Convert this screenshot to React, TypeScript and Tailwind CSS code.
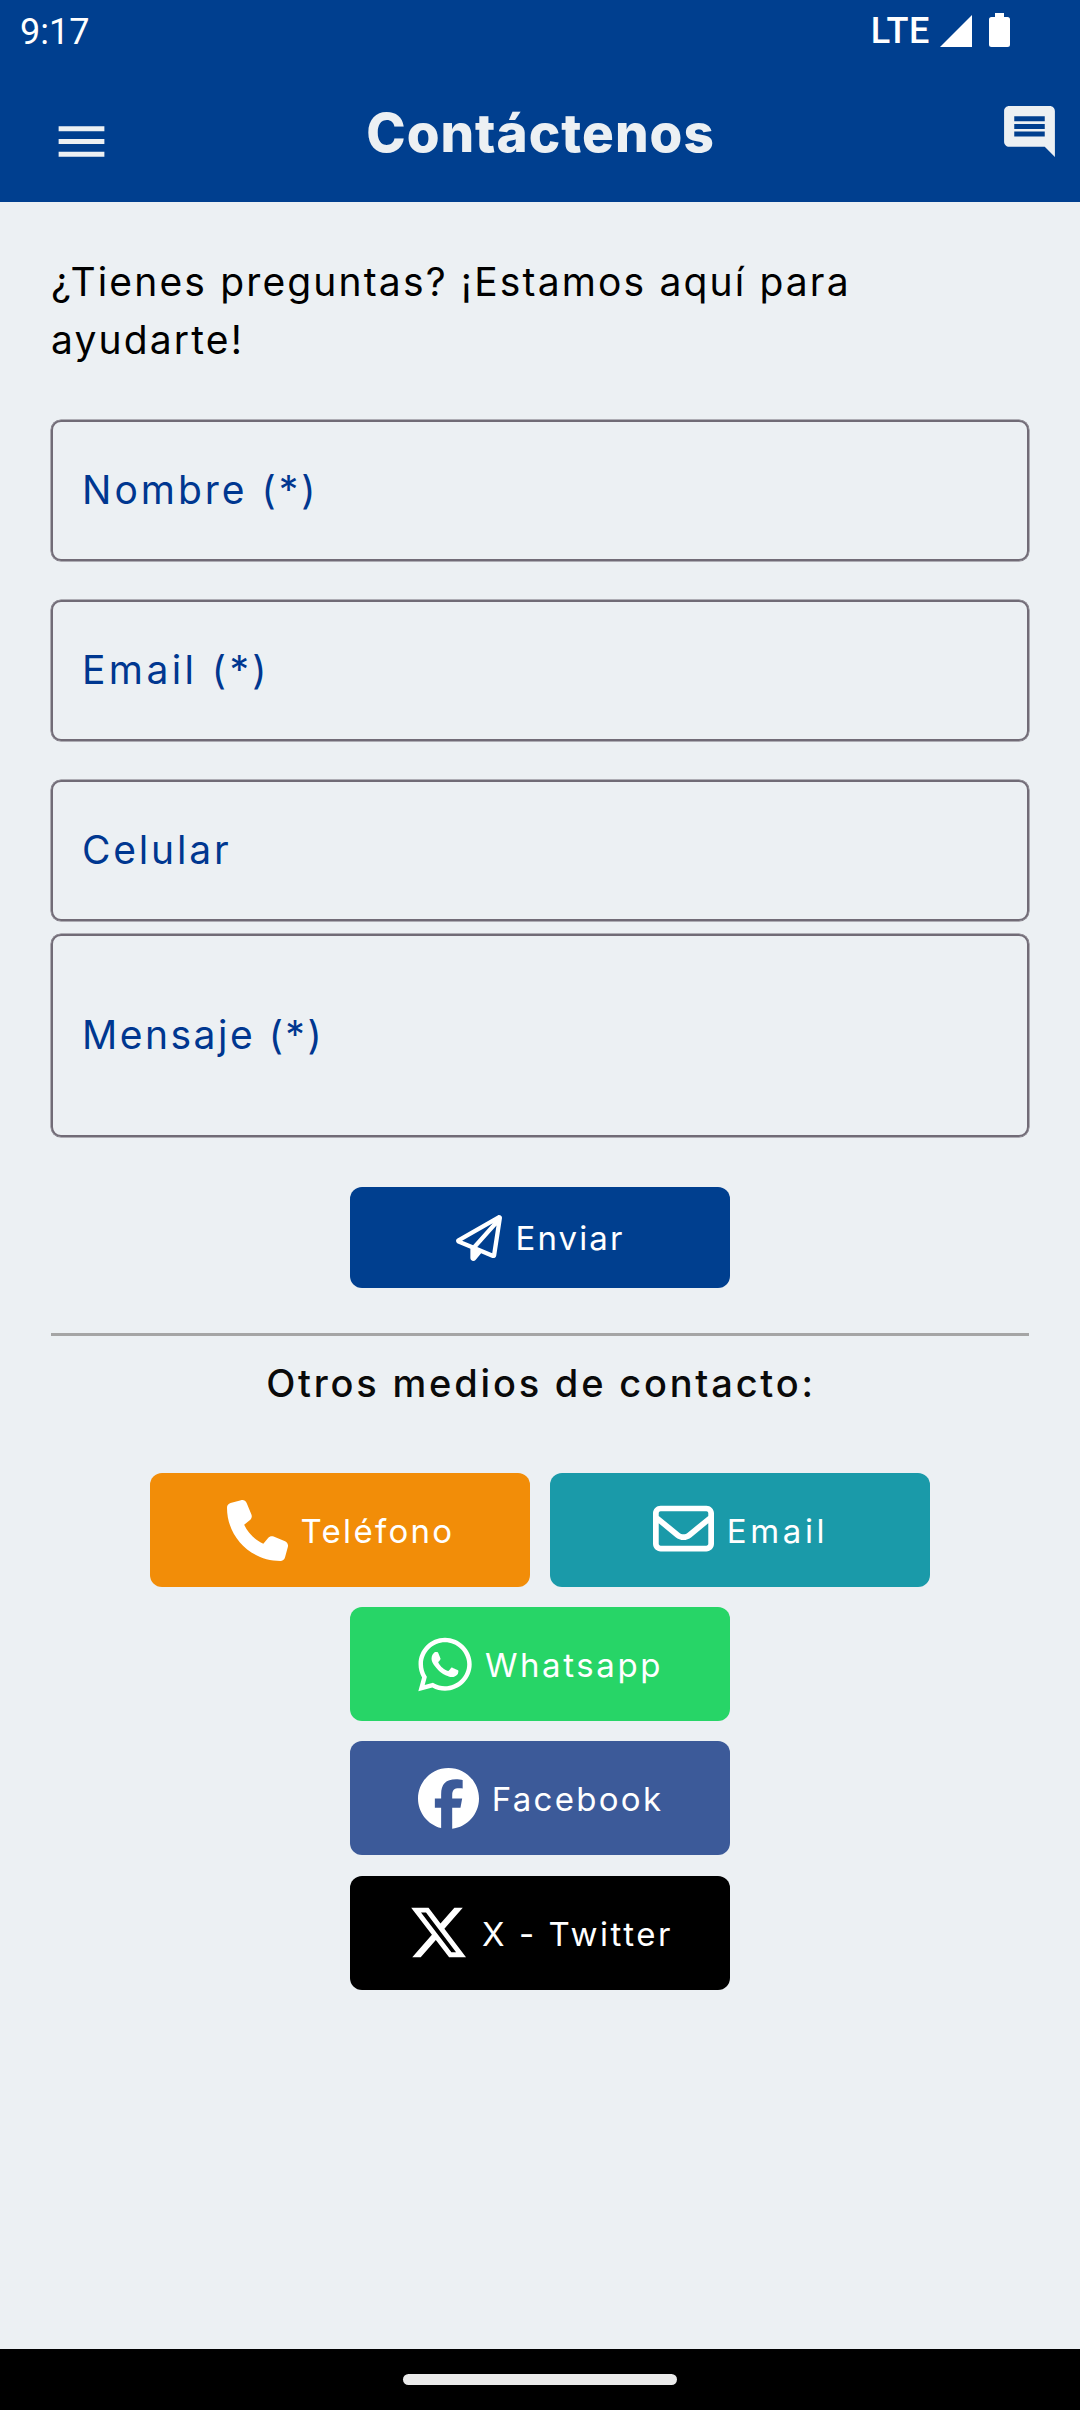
import { clsx } from "clsx"
import { MdComment, MdMenu } from "react-icons/md"
import { FaFacebook, FaPhone, FaRegEnvelope, FaRegPaperPlane, FaWhatsapp, FaXTwitter } from "react-icons/fa6"

const fields = [
  { label: "Nombre (*)", tracking: "tracking-[3px]", className: "h-[141px] mb-[39px]" },
  { label: "Email (*)", tracking: "tracking-[3.4px]", className: "h-[141px] mb-[39px]" },
  { label: "Celular", tracking: "tracking-[2.8px]", className: "h-[141px] mb-[13px]" },
  { label: "Mensaje (*)", tracking: "tracking-[2.5px]", className: "h-[203px]" },
]

const direct = [
  { label: "Teléfono", icon: FaPhone, color: "bg-[#f28d08]", tracking: "tracking-[2.3px]", iconClass: "w-[61px]" },
  { label: "Email", icon: FaRegEnvelope, color: "bg-[#1a9aa9]", tracking: "tracking-[3.6px]", iconClass: "w-[61px] mb-[3px]" },
]

const social = [
  { label: "Whatsapp", icon: FaWhatsapp, color: "bg-[#27d567]", tracking: "tracking-[2.6px]", iconClass: "w-[54px]" },
  { label: "Facebook", icon: FaFacebook, color: "bg-[#3c5a99]", tracking: "tracking-[2.3px]", iconClass: "w-[61px]" },
  { label: "X - Twitter", icon: FaXTwitter, color: "bg-black", tracking: "tracking-[2.6px]", iconClass: "w-[61px]" },
]

function StatusBar() {
  return (
    <div className="flex h-[62px] items-center pl-[20px] pr-[70px] font-[Roboto] text-[36px] leading-none text-white">
      <span className="pt-[2px]">9:17</span>
      <span className="ml-auto font-medium tracking-[0.6px]">LTE</span>
      <svg className="ml-[10px] h-[32px] w-[32px]" viewBox="0 0 32 32" fill="currentColor">
        <path d="M32 0v32H0z" />
      </svg>
      <svg className="ml-[17px] mb-[2px] h-[34px] w-[21px]" viewBox="0 0 21 34" fill="currentColor">
        <path d="M6 0h9v4h3.500a2.500 2.500 0 0 1 2.500 2.500v25a2.500 2.500 0 0 1-2.500 2.500h-16a2.500 2.500 0 0 1-2.500-2.500v-25a2.500 2.500 0 0 1 2.500-2.500H6z" />
      </svg>
    </div>
  )
}

function Header() {
  return (
    <header className="h-[202px] bg-[#003f8f]">
      <StatusBar />
      <div className="grid h-[140px] grid-cols-[1fr_auto_1fr] items-start text-[#ecf0f3]">
        <button aria-label="Menú" className="mt-[49px] ml-[50.5px] justify-self-start">
          <MdMenu className="h-[61px] w-[61px]" />
        </button>
        <h1 className="mt-[44px] pl-px text-[53px] leading-[54px] font-extrabold tracking-[1px]">Contáctenos</h1>
        <button aria-label="Chat" className="mt-[39px] mr-[20px] justify-self-end">
          <MdComment className="h-[61px] w-[61px]" />
        </button>
      </div>
    </header>
  )
}

function ContactButton({ label, icon: Icon, color, tracking, iconClass }: (typeof direct)[number]) {
  return (
    <button
      className={clsx(
        "flex h-[114px] w-[380px] items-center justify-center gap-[13px] rounded-[12px] pl-px text-white",
        color,
      )}
    >
      <Icon className={clsx("h-[61px] shrink-0", iconClass)} />
      <span className={clsx("pt-[3px] text-[33px] leading-none whitespace-nowrap", tracking)}>{label}</span>
    </button>
  )
}

export default function App() {
  return (
    <div className="flex h-[2410px] w-[1080px] flex-col bg-[#ecf0f3] font-['Inter','Liberation_Sans',sans-serif]">
      <Header />

      <main className="flex flex-1 flex-col px-[51px] pt-[51px]">
        <p className="mb-[51px] text-[39px] leading-[58px] tracking-[2.15px] text-black">
          ¿Tienes preguntas? ¡Estamos aquí para ayudarte!
        </p>

        {fields.map((field) => (
          <div
            key={field.label}
            className={clsx(
              "flex items-center rounded-[10px] border-2 border-[#716b76] px-[29px] pb-[3px] shadow-[0_0_0_0.5px_#716b76]",
              field.className,
            )}
          >
            <label className={clsx("text-[39px] leading-none text-[#003790]", field.tracking)}>
              {field.label}
            </label>
          </div>
        ))}

        <button className="mt-[50px] flex h-[101px] w-[380px] items-center justify-center gap-[14px] self-center rounded-[12px] bg-[#003f8f] text-white">
          <FaRegPaperPlane className="h-[46px] w-[46px]" />
          <span className="pt-[2px] text-[33px] leading-none tracking-[2.1px]">Enviar</span>
        </button>

        <hr className="mt-[45px] border-t-[3px] border-[#a5a5a5]" />

        <h2 className="mt-[22px] pl-[2px] text-center text-[38px] leading-[50px] font-medium tracking-[2.8px] text-[#0a0a0a]">
          Otros medios de contacto:
        </h2>

        <div className="mt-[65px] flex justify-center gap-[20px]">
          {direct.map((contact) => (
            <ContactButton key={contact.label} {...contact} />
          ))}
        </div>
        <div className="mt-[20px] flex flex-col items-center gap-[20.3px]">
          {social.map((contact) => (
            <ContactButton key={contact.label} {...contact} />
          ))}
        </div>
      </main>

      <footer className="flex h-[61px] items-center justify-center bg-black">
        <div className="h-[11px] w-[274px] rounded-full bg-[#ebebeb]" />
      </footer>
    </div>
  )
}
